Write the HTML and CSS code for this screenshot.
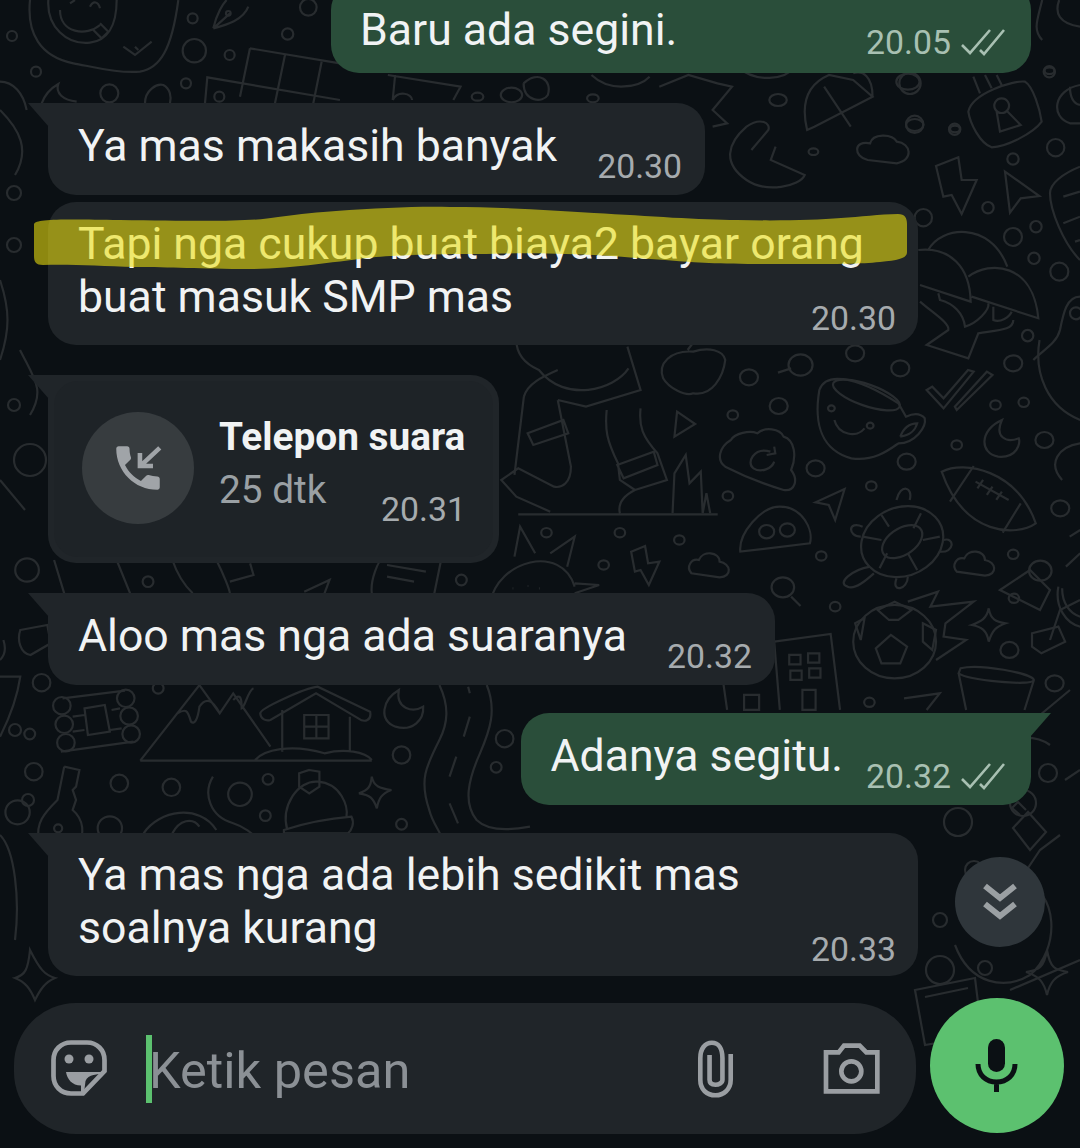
FILE: index.html
```html
<!DOCTYPE html>
<html lang="en">
<head>
  <meta charset="UTF-8">
  <meta name="viewport" content="width=device-width, initial-scale=1.0">
  <title>Chat</title>
  <link rel="stylesheet" href="styles.css">
</head>
<body>
  <!-- wallpaper doodles, each group is drawn in its own local scale -->
  <svg class="wallpaper" width="1080" height="1148" viewBox="0 0 1080 1148">
    <g transform="translate(490 340) scale(.3764 .3333)">
      <path d="M875 150C860 250 880 330 960 355C1020 365 1060 330 1085 310C1130 310 1160 260 1155 235C1140 215 1115 225 1105 230L1085 190M875 150C890 100 960 100 1085 190"/>
      <ellipse cx="1000" cy="165" rx="95" ry="32" transform="rotate(22 1000 165)"/>
      <path d="M915 240C925 285 975 295 995 265M1090 290C1100 260 1115 250 1135 250C1130 270 1120 285 1090 290"/>
      <circle cx="907" cy="205" r="9"/><circle cx="1010" cy="257" r="9"/>
      <path d="M640 300C610 320 600 360 625 380C660 400 720 430 780 450C810 455 820 420 800 390C815 350 810 300 780 290C770 265 730 260 710 280C690 270 650 280 640 300Z"/>
      <path d="M745 335C700 320 680 370 700 385C720 400 750 385 755 365M735 345L758 340L755 320"/>
      <path d="M497 215L545 252L490 290Z"/>
      <circle cx="825" cy="75" r="32"/><path d="M765 98L800 85"/>
      <path d="M1160 150L1205 205L1285 95L1270 90L1205 175L1175 140ZM1240 210L1335 105L1320 95L1235 200Z"/>
      <path d="M1360 240C1300 270 1300 340 1350 350C1400 355 1410 310 1405 295C1370 310 1340 290 1360 240Z"/>
      <path d="M1200 395C1260 360 1400 390 1450 550C1400 590 1260 590 1200 395ZM1285 378L1222 485M1410 490L1362 578M1290 425L1378 480M1295 445L1310 420M1320 465L1335 440M1345 480L1360 455"/>
      <ellipse cx="1095" cy="605" rx="115" ry="100" transform="rotate(-40 1095 605)"/>
      <ellipse cx="1095" cy="605" rx="62" ry="38" transform="rotate(-40 1095 605)"/>
      <path d="M1040 525L1060 560M1145 520L1125 565M1195 590L1150 600M1135 690L1110 640M1035 685L1055 640M990 590L1040 600"/>
      <path d="M1080 480C1090 430 1125 440 1115 480M990 560C950 540 950 590 985 590M1205 600C1235 590 1235 640 1195 635M1080 715C1065 760 1110 750 1110 710M1010 680C960 690 920 730 950 740C970 750 1000 720 1020 700"/>
      <path d="M942 447L865 487L900 495L917 540Z"/>
      <path d="M665 635C660 580 720 500 770 500C830 500 860 570 850 610Z"/>
      <circle cx="735" cy="575" r="20"/><circle cx="790" cy="570" r="20"/>
      <path id="cloudlet" d="M535 700C520 680 535 655 555 660C565 630 610 635 610 665C640 670 645 710 610 712Z"/>
      <use href="#cloudlet" x="705" y="-5"/>
      <path d="M375 635L412 618L420 670L450 665L422 735L400 690L385 695Z"/>
      <circle cx="778" cy="742" r="30"/><path d="M800 770L825 798"/>
      <circle cx="1075" cy="905" r="110"/>
      <path d="M1065 885L1108 920L1090 970L1040 970L1025 925ZM1030 810L1075 785L1120 810L1085 840L1060 840ZM1150 850L1185 870L1175 930L1150 905ZM970 850L995 835L985 900ZM1110 785L1190 755L1170 800L1285 785L1210 850L1205 890L1265 900L1185 960"/>
      <path d="M1325 805C1330 840 1345 845 1370 850C1345 860 1335 870 1325 905C1320 870 1305 860 1280 855C1305 845 1320 835 1325 805Z"/>
      <path d="M755 905L905 882L930 1110M755 905L770 1110M620 1030L630 1110M830 1050H865V1110H830ZM675 1065H715V1110H675Z"/>
      <rect x="795" y="945" width="30" height="28"/><rect x="845" y="940" width="30" height="28"/>
      <rect x="798" y="992" width="30" height="28"/><rect x="848" y="985" width="30" height="28"/>
      <path d="M1250 985C1300 970 1440 1000 1445 1020C1440 1040 1270 1020 1245 1000ZM1245 1000L1265 1110M1445 1020L1420 1110"/>
      <path d="M1100 1075L1195 1060L1160 1110"/>
      <path d="M0 790C20 660 190 610 225 740M65 650L80 560L120 640M160 640L225 590L205 680M225 730L290 735L225 760M60 745H62M100 738H102M130 745H132"/>
      <path d="M90 170L65 405M90 170C100 130 140 110 180 90M180 180L215 380C215 430 190 445 170 440L75 385L30 420L70 470L160 515M180 180L255 200L400 150L365 20M70 0C70 40 90 70 130 90C200 190 330 150 368 85M310 210C305 270 310 300 340 370L345 420L385 450C350 470 340 495 345 520M400 205C395 260 405 290 445 340L470 420L385 450M100 280L195 240L208 280L115 315ZM338 375L435 335L445 375L355 415ZM75 523H605"/>
      <path d="M485 520L490 400L520 345L530 430L560 395L565 520L575 460L585 520"/>
      <path d="M540 35C480 30 445 70 460 115C475 145 520 170 540 160C590 170 620 110 625 60C620 30 580 20 540 35ZM525 30L545 0"/>
      <path d="M1460 0C1445 100 1480 200 1568 240M1520 420C1480 370 1510 320 1568 310M1540 590L1568 570M1530 680L1568 640M1510 740C1500 800 1530 850 1568 860M1520 745C1520 790 1540 820 1568 830"/>
      <path d="M1440 880L1510 860L1528 905L1465 940L1440 920Z"/>
      <circle cx="688" cy="112" r="24"/><circle cx="767" cy="198" r="24"/><circle cx="645" cy="225" r="14"/>
      <circle cx="632" cy="468" r="14"/><circle cx="865" cy="385" r="24"/><circle cx="1090" cy="85" r="24"/>
      <circle cx="1107" cy="365" r="24"/><circle cx="1013" cy="438" r="14"/><circle cx="1390" cy="70" r="24"/>
      <circle cx="1343" cy="195" r="14"/><circle cx="1418" cy="187" r="14"/><circle cx="1240" cy="315" r="14"/>
      <circle cx="1473" cy="300" r="24"/><circle cx="1515" cy="505" r="24"/><circle cx="1390" cy="643" r="14"/>
      <circle cx="1462" cy="692" r="30"/><circle cx="1392" cy="775" r="14"/><circle cx="1380" cy="930" r="24"/>
      <circle cx="1500" cy="1030" r="24"/><circle cx="1008" cy="1087" r="14"/><circle cx="917" cy="800" r="14"/>
      <circle cx="880" cy="648" r="14"/><circle cx="503" cy="600" r="14"/><circle cx="345" cy="578" r="14"/>
      <circle cx="150" cy="578" r="14"/><circle cx="302" cy="675" r="14"/><circle cx="970" cy="40" r="24"/>
    </g>
    <g transform="translate(0 560) scale(.338 .3333)">
      <path d="M185 415L370 392M180 575L395 545M215 470L250 465M330 450L355 445M215 515L250 510M325 510L360 505M250 445L310 435L325 515L260 525Z"/>
      <circle cx="183" cy="437" r="26"/><circle cx="190" cy="493" r="26"/><circle cx="195" cy="548" r="26"/>
      <circle cx="372" cy="415" r="26"/><circle cx="382" cy="468" r="26"/><circle cx="388" cy="522" r="26"/>
      <path d="M415 602L590 375L650 460L690 400L800 560M525 460C550 445 555 450 565 485C575 495 585 480 590 440C610 410 630 420 650 460M690 420C710 400 715 410 715 445C725 440 735 390 750 385"/>
      <path d="M770 460C770 445 900 385 940 380L1095 455C1100 480 1080 490 1060 475L935 400L800 480C785 485 770 475 770 460ZM835 450V575M1035 470V575M415 602H1100M755 600C780 570 860 550 960 580C1020 565 1080 575 1100 600"/>
      <rect x="900" y="465" width="72" height="70"/><path d="M936 465V535M900 500H972"/>
      <path d="M1180 390C1130 420 1120 480 1170 500C1220 515 1255 480 1252 440C1220 460 1170 445 1180 390Z"/>
      <path d="M1300 375C1330 440 1325 490 1300 540C1260 620 1240 660 1270 750C1280 790 1300 810 1310 840M1440 375C1470 450 1450 510 1420 580C1385 660 1370 730 1410 780C1440 810 1490 815 1568 800M1385 380L1390 400M1390 470L1372 530M1350 590L1330 650M1330 730L1355 790"/>
      <path d="M190 620L235 630L225 680L215 690L225 720L215 750C250 780 250 830 230 840M190 620L170 720C130 760 105 790 115 840"/>
      <circle cx="172" cy="805" r="12"/>
      <path d="M850 810C830 740 880 660 940 665C1010 670 1030 740 1025 770M840 810C900 790 980 775 1040 770C1050 790 1040 810 1030 820H840Z"/>
      <path d="M915 630L945 635L945 680L915 700L885 680L885 640Z"/>
      <path d="M1100 650C1105 680 1125 685 1158 690C1130 700 1120 715 1115 745C1105 715 1095 705 1062 700C1090 690 1097 680 1100 650Z"/>
      <path d="M630 650C600 700 620 770 690 790C720 800 750 820 760 840"/>
      <path d="M425 820C470 750 590 730 640 810M510 820C530 780 570 770 590 800"/>
      <path d="M0 350H60C50 420 20 490 0 530M60 210L140 195L150 250L90 285C60 280 50 240 60 210ZM10 240C20 270 10 290 0 300"/>
      <path d="M160 0L190 100M345 0L385 100M510 0C530 60 560 90 570 100M640 0C660 40 680 90 680 100M680 65L750 45L740 10M900 95L975 60L960 100M1100 100C1095 60 1120 0 1130 0M1305 0L1285 100M1145 15L1260 35M1145 50L1225 65"/>
      <circle cx="123" cy="368" r="26"/><circle cx="88" cy="522" r="16"/><circle cx="100" cy="635" r="26"/>
      <circle cx="353" cy="670" r="26"/><circle cx="507" cy="682" r="26"/><circle cx="710" cy="703" r="35"/>
      <circle cx="793" cy="658" r="16"/><circle cx="785" cy="767" r="16"/><circle cx="1188" cy="585" r="26"/>
      <circle cx="1188" cy="793" r="16"/><circle cx="1493" cy="536" r="26"/><circle cx="1468" cy="622" r="16"/>
      <circle cx="52" cy="757" r="36"/><circle cx="325" cy="805" r="36"/><circle cx="468" cy="385" r="16"/>
      <circle cx="80" cy="30" r="35"/><circle cx="438" cy="65" r="16"/><circle cx="1365" cy="60" r="16"/>
    </g>
    <g transform="translate(0 0) scale(.3333)">
      <path d="M90 0C80 100 120 170 220 190C300 205 360 220 420 215C480 205 515 150 535 0"/>
      <path d="M145 0C140 80 200 135 270 128C320 122 350 80 350 0M180 30C180 100 260 110 300 75M280 90L305 115L325 95L300 70M210 10L225 0M270 20C280 0 295 5 300 25"/>
      <path d="M370 140L405 165L455 125M405 140L415 150"/>
      <path d="M640 85C650 40 670 10 680 0M640 85C680 75 730 60 745 20M640 85L690 40"/>
      <circle cx="685" cy="40" r="7"/>
      <path d="M750 145L1020 190M720 290L750 145M615 310L622 232L1020 300M855 165L825 310M965 185L940 310"/>
      <path d="M125 310C140 270 170 255 175 252C165 280 190 300 230 305M435 310C435 270 470 250 490 255C510 265 515 290 510 310M0 245C40 245 70 280 80 330"/>
      <circle cx="36" cy="108" r="15"/><circle cx="108" cy="215" r="15"/><circle cx="578" cy="55" r="15"/>
      <circle cx="583" cy="152" r="35"/><circle cx="689" cy="165" r="15"/><circle cx="863" cy="102" r="17"/>
      <circle cx="558" cy="250" r="15"/><circle cx="328" cy="280" r="27"/><circle cx="925" cy="22" r="25"/>
      <circle cx="658" cy="290" r="15"/>
    </g>
    <g transform="translate(320 0) scale(.4847 .3333)">
      <path d="M880 380C840 430 830 490 880 540C920 580 990 560 1000 525L930 480L940 440M880 380C910 350 930 370 925 390L890 450M700 260L760 225L820 250L850 260L810 330L840 370L810 380M1005 390C990 300 1010 250 1050 225L1100 240L1140 290L1020 380ZM1040 260L1095 380M1100 220C1120 210 1140 230 1140 290"/>
      <path d="M1130 480C1100 470 1100 420 1135 430C1140 400 1180 400 1190 425C1220 430 1225 480 1190 490Z"/>
      <path d="M420 250C450 210 480 240 470 285C460 310 420 305 420 250M560 225C600 280 660 260 680 230M860 200C900 250 960 240 980 200M1490 0C1480 60 1470 90 1490 120M1525 0C1515 40 1525 70 1568 80"/>
      <path d="M140 225L290 260L275 300M155 225L150 300M150 300C160 270 190 280 190 300"/>
      <circle cx="325" cy="290" r="12"/><circle cx="395" cy="285" r="22"/><circle cx="563" cy="295" r="12"/>
      <circle cx="945" cy="300" r="18"/><circle cx="1018" cy="455" r="10"/><circle cx="1213" cy="245" r="24"/>
      <circle cx="1227" cy="375" r="18"/><circle cx="1310" cy="387" r="10"/><circle cx="1505" cy="212" r="10"/>
    </g>
    <g transform="translate(900 60) scale(.3333)">
      <path d="M205 155C215 100 340 60 375 65C400 80 420 150 425 185C400 220 320 260 275 262C240 250 210 190 205 155ZM240 100L220 50M275 85L255 45M305 75L290 45"/>
      <path d="M305 115a22 22 0 1 0 .1 0ZM290 155L300 215L362 195L318 150"/>
      <path d="M108 318L175 292L185 360L230 360L185 462L155 405L130 410Z"/>
      <path d="M315 335L418 408L362 415L330 458Z"/>
      <path d="M85 570C120 500 270 480 322 620M55 570C150 560 210 620 212 725L60 675M205 650C270 600 400 610 415 775L215 710"/>
      <path d="M115 700L120 720C160 730 190 760 195 800C230 790 270 750 265 730M280 740L280 780C300 790 330 770 335 755M60 725C100 760 150 790 145 810L80 855L205 895L235 820C300 810 340 810 340 780"/>
      <path d="M540 320C490 340 450 370 450 400C450 450 490 550 540 600M490 410L540 395M490 490L540 470M525 545L540 540"/>
      <path d="M540 75C460 90 450 170 510 190L540 190M510 80C510 110 520 130 540 135M540 710C500 710 490 760 480 810C470 850 430 870 400 900"/>
      <circle cx="448" cy="35" r="17"/><circle cx="30" cy="70" r="32"/><circle cx="44" cy="193" r="26"/>
      <circle cx="164" cy="208" r="17"/><circle cx="467" cy="263" r="26"/><circle cx="339" cy="297" r="17"/>
      <circle cx="264" cy="443" r="17"/><circle cx="408" cy="500" r="17"/><circle cx="339" cy="531" r="27"/>
      <circle cx="402" cy="595" r="17"/><circle cx="478" cy="635" r="27"/><circle cx="70" cy="473" r="26"/>
      <circle cx="383" cy="827" r="17"/><circle cx="528" cy="760" r="18"/>
    </g>
    <g>
      <path d="M1020 880C1060 890 1060 950 1030 975C1005 990 970 985 955 945M1020 880L1040 850L1060 835M1047 950C1050 968 1055 970 1068 972C1055 976 1050 982 1047 995C1044 982 1039 976 1026 972C1039 970 1044 968 1047 950Z"/>
      <path d="M1013 828L1028 812L1046 832L1030 850ZM1020 815L1012 808L1018 802L1026 810"/>
      <path d="M915 990L975 978L982 1035L925 1045ZM925 997L968 988M1010 990L1080 960M30 950C40 970 45 975 55 978C45 982 40 990 35 1000C30 988 25 982 15 978C25 975 28 970 30 950ZM0 835C15 850 20 900 15 940"/>
      <path d="M970 755C1000 740 1030 730 1050 745M1010 720L1040 715L1070 690M1065 780L1080 770M1050 640L1060 610L1080 600M1000 590L1030 570L1050 590L1040 610Z"/>
      <circle cx="974" cy="870" r="9"/><circle cx="958" cy="822" r="14"/><circle cx="940" cy="920" r="7"/>
      <circle cx="940" cy="970" r="14"/><circle cx="985" cy="968" r="7"/><circle cx="1023" cy="803" r="13"/>
      <circle cx="1048" cy="773" r="9"/><circle cx="950" cy="780" r="7"/><circle cx="28" cy="800" r="6"/>
      <circle cx="15" cy="730" r="6"/><circle cx="30" cy="460" r="16"/><circle cx="14" cy="245" r="7"/>
      <circle cx="14" cy="193" r="7"/><circle cx="14" cy="405" r="6"/>
      <path d="M0 110C20 130 30 150 15 175M0 280C10 310 10 330 0 360M0 480L25 510M20 350C35 380 45 390 30 415"/>
    </g>
  </svg>

  <div class="screen">
    <div class="chat">
      <div class="msg msg-out msg-top">
        <div class="msg-text">Baru ada segini.</div>
        <div class="meta">
          <span class="time">20.05</span>
          <svg class="ticks" width="46" height="30" viewBox="0 0 46 30"><path d="M2 17L10 25L30 2M20 22L24 26L44 2"/></svg>
        </div>
      </div>
      <div class="msg msg-in tail">
        <div class="msg-text">Ya mas makasih banyak</div>
        <div class="meta"><span class="time">20.30</span></div>
      </div>
      <div class="msg msg-in msg-wide group-next">
        <div class="msg-text">Tapi nga cukup buat biaya2 bayar orang<br>buat masuk SMP mas</div>
        <div class="meta"><span class="time">20.30</span></div>
      </div>
      <div class="msg msg-call tail">
        <div class="call-card">
          <div class="call-icon">
            <svg width="58" height="58" viewBox="0 0 24 24"><path class="phone" d="M20 15.500c-1.250 0-2.450-.2-3.570-.57-.35-.11-.74-.03-1.020.24l-2.200 2.200c-2.830-1.440-5.150-3.750-6.590-6.590l2.200-2.210c.28-.26.36-.65.25-1C8.700 6.450 8.500 5.250 8.500 4c0-.55-.45-1-1-1H4c-.55 0-1 .45-1 1 0 9.390 7.610 17 17 17 .55 0 1-.45 1-1v-3.500c0-.55-.45-1-1-1z"/><path class="arrow" d="M21 3.700L13.600 10.600M12.800 5.800V11.200H18.200"/></svg>
          </div>
          <div class="call-info">
            <div class="call-title">Telepon suara</div>
            <div class="call-row">
              <span class="call-length">25 dtk</span>
              <span class="time">20.31</span>
            </div>
          </div>
        </div>
      </div>
      <div class="msg msg-in tail">
        <div class="msg-text">Aloo mas nga ada suaranya</div>
        <div class="meta"><span class="time">20.32</span></div>
      </div>
      <div class="msg msg-out tail">
        <div class="msg-text">Adanya segitu.</div>
        <div class="meta">
          <span class="time">20.32</span>
          <svg class="ticks" width="46" height="30" viewBox="0 0 46 30"><path d="M2 17L10 25L30 2M20 22L24 26L44 2"/></svg>
        </div>
      </div>
      <div class="msg msg-in msg-wide tail">
        <div class="msg-text">Ya mas nga ada lebih sedikit mas<br>soalnya kurang</div>
        <div class="meta"><span class="time">20.33</span></div>
      </div>
    </div>

    <div class="composer">
      <div class="input-bar">
        <svg class="bar-icon sticker" width="60" height="60" viewBox="0 0 60 60">
          <path d="M21 3.500H37C47 3.500 54.500 11 54.500 21V32L33 54.500H21C11 54.500 3.500 47 3.500 37V21C3.500 11 11 3.500 21 3.500Z"/>
          <path class="dot" d="M16 33H55L54 34.500C48 35.500 38 35 35.500 42L34 54H31V46.500C22 46.500 17 40 16 33Z"/>
          <circle class="dot" cx="19" cy="20" r="4.500"/><circle class="dot" cx="39" cy="20" r="4.500"/>
        </svg>
        <span class="caret"></span>
        <span class="placeholder">Ketik pesan</span>
        <svg class="bar-icon clip" width="38" height="58" viewBox="35 30 115 175">
          <path d="M137 72V150C137 180 115 197 91 197C65 197 45 180 45 150V85C45 55 60 38 80 38C100 38 112 55 112 85V150C112 160 100 165 91 165C80 165 73 160 73 150V75"/>
        </svg>
        <svg class="bar-icon camera" width="57" height="52" viewBox="415 40 171 156">
          <path d="M424 68H462L478 48H525L545 68H578V185H424Z"/>
          <circle cx="500" cy="125" r="30"/>
        </svg>
      </div>
      <button class="mic-btn" type="button">
        <svg width="44" height="56" viewBox="0 0 44 56">
          <rect class="mic-body" x="13" y="1" width="17" height="33" rx="8.500"/>
          <path class="mic-arc" d="M3 26C3 37 11 44 21.500 44C32 44 40 37 40 26M21.500 44V54"/>
        </svg>
      </button>
    </div>

    <button class="jump-btn" type="button">
      <svg width="36" height="40" viewBox="0 0 36 40"><path d="M3 4L18 16L33 4M3 22L18 34L33 22"/></svg>
    </button>

    <!-- marker stroke drawn over the screenshot -->
    <svg class="marker" width="1080" height="1148" viewBox="0 0 1080 1148">
      <path d="M34 224C36 219 60 219 120 220C200 221 250 222 278 217C300 214 320 212 336 211C380 208 420 206 450 207C500 207 550 210 594 213C650 216 700 220 737 220C780 221 815 220 841 218C860 217 880 214 898 214C905 214 907 218 907 224L907 252C907 258 900 260 880 262C860 264 840 264 800 264C760 264 730 264 709 263C670 261 630 257 594 255C550 253 510 253 479 254C440 254 400 255 376 257C340 261 290 269 250 269C200 269 170 267 135 267C100 266 70 264 43 265C36 265 34 262 34 256Z"/>
    </svg>
  </div>
</body>
</html>
```

FILE: styles.css
```css
* { box-sizing: border-box; }
body {
  margin: 0;
  background: #0b1014;
  font-family: Roboto, sans-serif;
  overflow: hidden;
}
.wallpaper {
  position: absolute;
  top: 0;
  left: 0;
  fill: none;
  stroke: #282c2f;
  stroke-width: 2.2;
}
.wallpaper * { vector-effect: non-scaling-stroke; }
.screen {
  position: relative;
  width: 1080px;
  height: 1148px;
  overflow: hidden;
}
.chat {
  display: flex;
  flex-direction: column;
  gap: 30px;
  padding: 0 49px 0 48px;
}
.msg {
  position: relative;
  display: flex;
  align-items: flex-end;
  border-radius: 28px;
  padding: 17px 23px 8px 30px;
  color: #f1f3f4;
  width: fit-content;
}
.msg-text {
  font-size: 44.6px;
  line-height: 53px;
  white-space: nowrap;
  margin-bottom: 14px;
}
.meta {
  display: flex;
  align-items: center;
  gap: 9px;
  margin-left: 40px;
}
.time {
  font-size: 33.8px;
  line-height: 40px;
  color: #a6abae;
}
.msg-in, .msg-call { background: #202529; }
.msg-out {
  align-self: flex-end;
  background: #2a4e3a;
  padding-left: 29px;
  padding-right: 25px;
}
.msg-out .time { color: #a8c0b2; }
.msg-out .meta { margin-left: 23px; }
.msg-out.tail { margin-top: -2px; }
.msg-top {
  width: 700px;
  margin-top: -18px;
  justify-content: space-between;
  padding-top: 22px;
}
.msg-top .msg-text { margin-bottom: 8px; }
.msg-top .meta { margin-bottom: 2px; }
.ticks {
  fill: none;
  stroke: #a8c0b2;
  stroke-width: 2.6;
}
.msg-wide {
  flex-direction: column;
  align-items: stretch;
  width: 870px;
  padding-top: 16px;
  padding-right: 22px;
  padding-bottom: 6px;
}
.msg-wide.tail { margin-top: -2px; }
.msg-wide .msg-text { margin-bottom: 0; }
.msg-wide .meta {
  justify-content: flex-end;
  margin-top: -25px;
}
.msg-wide.group-next { margin-top: -23px; }
.tail { border-top-left-radius: 0; }
.msg-out.tail { border-top-left-radius: 28px; border-top-right-radius: 0; }
.tail::before {
  content: "";
  position: absolute;
  top: 0;
  left: -20px;
  width: 21px;
  height: 24px;
  background: inherit;
  clip-path: polygon(0 0, 100% 0, 100% 100%);
}
.msg-out.tail::before {
  left: auto;
  right: -20px;
  clip-path: polygon(0 0, 100% 0, 0 100%);
}

/* call bubble */
.msg-call {
  width: 451px;
  height: 188px;
  padding: 6px;
}
.call-card {
  display: flex;
  gap: 25px;
  width: 100%;
  height: 100%;
  padding: 31px 0 0 28px;
  background: #1e2327;
  border-radius: 24px;
}
.call-icon {
  display: flex;
  align-items: center;
  justify-content: center;
  flex: none;
  width: 112px;
  height: 112px;
  border-radius: 50%;
  background: #373c3f;
}
.call-icon .phone { fill: #a0a4a8; }
.call-icon .arrow { fill: none; stroke: #a0a4a8; stroke-width: 1.9; }
.call-info { flex: 1; }
.call-title {
  font-size: 38.8px;
  line-height: 48px;
  font-weight: 700;
  color: #f1f3f4;
  margin-top: 1px;
  white-space: nowrap;
}
.call-row {
  display: flex;
  justify-content: space-between;
  margin-top: 4px;
  padding-right: 27px;
}
.call-length {
  font-size: 38.8px;
  line-height: 50px;
  color: #9aa0a4;
}
.call-row .time { margin-top: 25px; }

/* bottom bar */
.composer {
  position: absolute;
  left: 14px;
  top: 998px;
  display: flex;
  gap: 14px;
}
.input-bar {
  display: flex;
  align-items: center;
  width: 902px;
  height: 131px;
  margin-top: 5px;
  padding-left: 36px;
  border-radius: 62px;
  background: #202529;
}
.bar-icon {
  flex: none;
  fill: none;
  stroke: #9a9ea2;
  stroke-width: 4.7;
}
.clip, .camera { stroke-width: 14; }
.bar-icon .dot { fill: #9a9ea2; stroke: none; }
.caret {
  flex: none;
  width: 6px;
  height: 68px;
  margin-left: 36px;
  background: #5cc16f;
}
.placeholder {
  flex: 1;
  font-size: 50.5px;
  color: #8b9095;
  margin-top: 4px;
  margin-left: -3px;
}
.clip { margin-right: 88px; }
.camera { margin-right: 36px; }
.mic-btn {
  display: flex;
  align-items: center;
  justify-content: center;
  flex: none;
  width: 134px;
  height: 135px;
  padding: 0;
  border: none;
  border-radius: 50%;
  background: #5cc16f;
}
.mic-body { fill: #0b1014; }
.mic-arc { fill: none; stroke: #0b1014; stroke-width: 5; }
.jump-btn {
  position: absolute;
  left: 955px;
  top: 857px;
  display: flex;
  align-items: center;
  justify-content: center;
  width: 90px;
  height: 90px;
  padding: 0;
  border: none;
  border-radius: 50%;
  background: #2f363b;
}
.jump-btn svg {
  fill: none;
  stroke: #9ba0a3;
  stroke-width: 6;
}
.marker {
  position: absolute;
  top: 0;
  left: 0;
  fill: rgba(236, 224, 14, .58);
}
```
